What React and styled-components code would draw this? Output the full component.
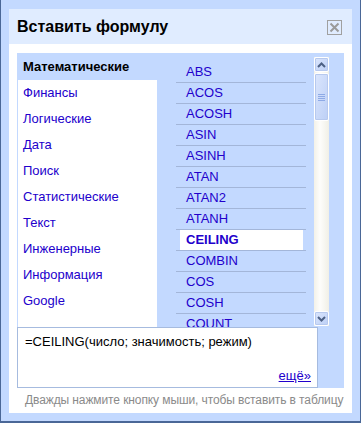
import React from "react";
import styled, { createGlobalStyle } from "styled-components";

const GlobalStyle = createGlobalStyle`
  html, body { margin: 0; padding: 0; }
  body { font-family: Arial, "Liberation Sans", sans-serif; }
  * { box-sizing: border-box; }
`;

const Frame = styled.div`
  width: 361px;
  height: 423px;
  background: #c3d9ff;
  border-left: 1px solid #4a6797;
  border-right: 1px solid #4a6797;
  border-bottom: 2px solid #4a6797;
  padding: 9px 8px 8px 8px;
`;

const Dialog = styled.div`
  width: 343px;
  height: 404px;
  background: #fff;
  display: flex;
  flex-direction: column;
`;

const TitleBar = styled.div`
  height: 35px;
  background: #e0ecff;
  display: flex;
  align-items: center;
  justify-content: space-between;
  padding: 0 10px 0 8px;
`;

const Title = styled.div`
  font-weight: bold;
  font-size: 16px;
  color: #000;
  margin-top: 1px;
`;

const Close = styled.div`
  width: 15px;
  height: 15px;
  border: 1px solid #a0a0a0;
  display: flex;
  align-items: center;
  justify-content: center;
  margin-top: 1px;
`;

const Body = styled.div`
  padding: 9px 8px 0 8px;
`;

const Panel = styled.div`
  width: 327px;
  height: 335px;
  background: #c3d9ff;
  display: flex;
  flex-direction: column;
`;

const TopRow = styled.div`
  height: 274px;
  display: flex;
`;

const CategoryList = styled.div`
  width: 139px;
  margin: 1px 0 0 1px;
  background: #fff;
`;

const Category = styled.div`
  height: 26px;
  line-height: 26px;
  padding-left: 5px;
  font-size: 13px;
  color: ${(p) => (p.$active ? "#000" : "#2200cc")};
  font-weight: ${(p) => (p.$active ? "bold" : "normal")};
  background: ${(p) => (p.$active ? "#c3d9ff" : "#fff")};
`;

const FunctionList = styled.div`
  width: 157px;
  padding: 9px 8px 0 19px;
  overflow: hidden;
`;

const FnRow = styled.div`
  height: 21px;
  border-bottom: 1px solid #a3b6d9;
  padding: 0 3px 0 4px;
`;

const FnLabel = styled.div`
  height: 20px;
  line-height: 20px;
  padding-left: 6px;
  font-size: 13px;
  color: #2200cc;
  font-weight: ${(p) => (p.$active ? "bold" : "normal")};
  background: ${(p) => (p.$active ? "#fff" : "transparent")};
`;

const Scrollbar = styled.div`
  width: 15px;
  height: 269px;
  margin-top: 4px;
  background: linear-gradient(to right, #f3f1e8, #fdfdfb 40%, #f0efe6);
  display: flex;
  flex-direction: column;
  justify-content: space-between;
  position: relative;
`;

const ScrollButton = styled.div`
  width: 15px;
  height: ${(p) => p.$h}px;
  border: 1px solid #fff;
  border-radius: 2px;
  box-shadow: inset 0 0 0 1px #b7c9ee;
  background: linear-gradient(to bottom right, #dbe6fd, #bccff6);
  display: flex;
  align-items: center;
  justify-content: center;
`;

const Thumb = styled(ScrollButton)`
  position: absolute;
  top: 16px;
  left: 0;
`;

const Description = styled.div`
  width: 301px;
  height: 61px;
  background: #fff;
  border: 1px solid #a6bbdf;
  padding: 6px 6px 4px 7px;
  display: flex;
  flex-direction: column;
  justify-content: space-between;
`;

const Signature = styled.div`
  font-size: 13px;
  color: #000;
`;

const More = styled.a`
  align-self: flex-end;
  font-size: 13px;
  color: #2200cc;
  text-decoration: underline;
`;

const Hint = styled.div`
  margin-top: 5px;
  padding-left: 8px;
  font-size: 12px;
  line-height: 14px;
  letter-spacing: -0.1px;
  color: #8a8a8a;
  white-space: nowrap;
`;

const categories = [
  "Математические",
  "Финансы",
  "Логические",
  "Дата",
  "Поиск",
  "Статистические",
  "Текст",
  "Инженерные",
  "Информация",
  "Google",
];

const functions = [
  "ABS",
  "ACOS",
  "ACOSH",
  "ASIN",
  "ASINH",
  "ATAN",
  "ATAN2",
  "ATANH",
  "CEILING",
  "COMBIN",
  "COS",
  "COSH",
  "COUNT",
];

export default function App() {
  return (
    <>
      <GlobalStyle />
      <Frame>
        <Dialog>
          <TitleBar>
            <Title>Вставить формулу</Title>
            <Close>
              <svg width="11" height="11" viewBox="0 0 11 11">
                <path d="M1.5 1.5 L9.5 9.5 M9.5 1.5 L1.5 9.5" stroke="#9a9a9a" strokeWidth="2" />
              </svg>
            </Close>
          </TitleBar>
          <Body>
            <Panel>
              <TopRow>
                <CategoryList>
                  {categories.map((c, i) => (
                    <Category key={c} $active={i === 0}>
                      {c}
                    </Category>
                  ))}
                </CategoryList>
                <FunctionList>
                  {functions.map((f) => (
                    <FnRow key={f}>
                      <FnLabel $active={f === "CEILING"}>{f}</FnLabel>
                    </FnRow>
                  ))}
                </FunctionList>
                <Scrollbar>
                  <ScrollButton $h={15}>
                    <svg width="9" height="6" viewBox="0 0 9 6">
                      <path d="M1 5 L4.5 1.5 L8 5" stroke="#4d6185" strokeWidth="2" fill="none" />
                    </svg>
                  </ScrollButton>
                  <Thumb $h={48}>
                    <svg width="7" height="7" viewBox="0 0 7 7">
                      <path d="M0 0.5 H7 M0 2.5 H7 M0 4.5 H7 M0 6.5 H7" stroke="#8eaae6" strokeWidth="1" />
                    </svg>
                  </Thumb>
                  <ScrollButton $h={15}>
                    <svg width="9" height="6" viewBox="0 0 9 6">
                      <path d="M1 1 L4.5 4.5 L8 1" stroke="#4d6185" strokeWidth="2" fill="none" />
                    </svg>
                  </ScrollButton>
                </Scrollbar>
              </TopRow>
              <Description>
                <Signature>=CEILING(число; значимость; режим)</Signature>
                <More href="#">ещё»</More>
              </Description>
            </Panel>
            <Hint>Дважды нажмите кнопку мыши, чтобы вставить в таблицу</Hint>
          </Body>
        </Dialog>
      </Frame>
    </>
  );
}
